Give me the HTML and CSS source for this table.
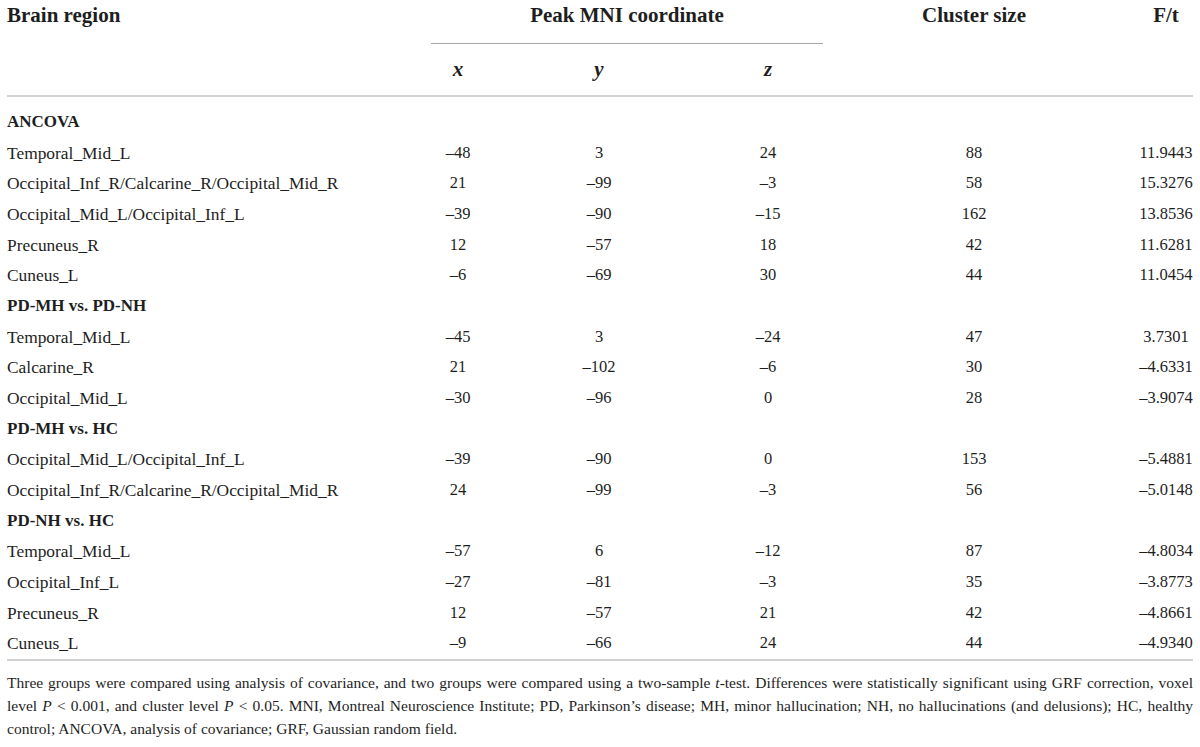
FILE: index.html
```html
<!DOCTYPE html>
<html lang="en">
<head>
<meta charset="utf-8">
<title>Brain regions table</title>
<link rel="stylesheet" href="styles.css">
</head>
<body>
<div class="page">
  <div class="thead">
    <div class="th th-label">Brain region</div>
    <div class="th th-mni"><span class="mni-text">Peak MNI coordinate</span></div>
    <div class="th th-cluster">Cluster size</div>
    <div class="th th-ft">F/t</div>
    <div class="th th-axis c-x">x</div>
    <div class="th th-axis c-y">y</div>
    <div class="th th-axis c-z">z</div>
  </div>
  <div class="tbody">
    <div class="group">ANCOVA</div>
    <div class="lbl">Temporal_Mid_L</div><div class="num">–48</div><div class="num">3</div><div class="num">24</div><div class="num">88</div><div class="num ft">11.9443</div>
    <div class="lbl">Occipital_Inf_R/Calcarine_R/Occipital_Mid_R</div><div class="num">21</div><div class="num">–99</div><div class="num">–3</div><div class="num">58</div><div class="num ft">15.3276</div>
    <div class="lbl">Occipital_Mid_L/Occipital_Inf_L</div><div class="num">–39</div><div class="num">–90</div><div class="num">–15</div><div class="num">162</div><div class="num ft">13.8536</div>
    <div class="lbl">Precuneus_R</div><div class="num">12</div><div class="num">–57</div><div class="num">18</div><div class="num">42</div><div class="num ft">11.6281</div>
    <div class="lbl">Cuneus_L</div><div class="num">–6</div><div class="num">–69</div><div class="num">30</div><div class="num">44</div><div class="num ft">11.0454</div>
    <div class="group">PD-MH vs. PD-NH</div>
    <div class="lbl">Temporal_Mid_L</div><div class="num">–45</div><div class="num">3</div><div class="num">–24</div><div class="num">47</div><div class="num ft">3.7301</div>
    <div class="lbl">Calcarine_R</div><div class="num">21</div><div class="num">–102</div><div class="num">–6</div><div class="num">30</div><div class="num ft">–4.6331</div>
    <div class="lbl">Occipital_Mid_L</div><div class="num">–30</div><div class="num">–96</div><div class="num">0</div><div class="num">28</div><div class="num ft">–3.9074</div>
    <div class="group">PD-MH vs. HC</div>
    <div class="lbl">Occipital_Mid_L/Occipital_Inf_L</div><div class="num">–39</div><div class="num">–90</div><div class="num">0</div><div class="num">153</div><div class="num ft">–5.4881</div>
    <div class="lbl">Occipital_Inf_R/Calcarine_R/Occipital_Mid_R</div><div class="num">24</div><div class="num">–99</div><div class="num">–3</div><div class="num">56</div><div class="num ft">–5.0148</div>
    <div class="group">PD-NH vs. HC</div>
    <div class="lbl">Temporal_Mid_L</div><div class="num">–57</div><div class="num">6</div><div class="num">–12</div><div class="num">87</div><div class="num ft">–4.8034</div>
    <div class="lbl">Occipital_Inf_L</div><div class="num">–27</div><div class="num">–81</div><div class="num">–3</div><div class="num">35</div><div class="num ft">–3.8773</div>
    <div class="lbl">Precuneus_R</div><div class="num">12</div><div class="num">–57</div><div class="num">21</div><div class="num">42</div><div class="num ft">–4.8661</div>
    <div class="lbl">Cuneus_L</div><div class="num">–9</div><div class="num">–66</div><div class="num">24</div><div class="num">44</div><div class="num ft">–4.9340</div>
  </div>
  <div class="note">
    <span class="note-line">Three groups were compared using analysis of covariance, and two groups were compared using a two-sample <i>t</i>-test. Differences were statistically significant using GRF correction, voxel</span>
    <span class="note-line">level <i>P</i> &lt; 0.001, and cluster level <i>P</i> &lt; 0.05. MNI, Montreal Neuroscience Institute; PD, Parkinson’s disease; MH, minor hallucination; NH, no hallucinations (and delusions); HC, healthy</span>
    <span class="note-line last">control; ANCOVA, analysis of covariance; GRF, Gaussian random field.</span>
  </div>
</div>
</body>
</html>
```

FILE: styles.css
```css
* { box-sizing: border-box; }

html, body {
  margin: 0;
  padding: 0;
  background: #ffffff;
}

body {
  font-family: "Liberation Serif", "Times New Roman", serif;
  color: #1e1e1e;
}

.page {
  width: 1186px;
  margin-left: 7px;
}

.thead,
.tbody {
  display: grid;
  grid-template-columns: 411px 80px 202px 136px 276px 81px;
}

.thead {
  padding-top: 2px;
  padding-bottom: 13px;
  border-bottom: 2px solid #d2d2d2;
}

.th {
  font-size: 21px;
  font-weight: bold;
  line-height: 26px;
  white-space: nowrap;
}

.th-label {
  grid-column: 1;
  grid-row: 1;
}

.th-mni {
  grid-column: 2 / 5;
  grid-row: 1;
  margin: 0 13px;
  padding-bottom: 15px;
  border-bottom: 1px solid #a8a8a8;
  text-align: center;
}

.th-cluster {
  grid-column: 5;
  grid-row: 1;
  text-align: center;
}

.th-ft {
  grid-column: 6;
  grid-row: 1;
  padding-left: 27px;
  text-align: center;
}

.th-axis {
  grid-row: 2;
  padding-top: 12px;
  font-style: italic;
  text-align: center;
}

.c-x { grid-column: 2; }
.c-y { grid-column: 3; }
.c-z { grid-column: 4; }

.tbody {
  grid-auto-rows: 30.66px;
  padding-top: 10px;
  padding-bottom: 0;
  border-bottom: 2px solid #d2d2d2;
}

.group {
  grid-column: 1 / -1;
  font-size: 17px;
  font-weight: bold;
  line-height: 30.66px;
}

.lbl {
  font-size: 17.4px;
  line-height: 30.66px;
  white-space: nowrap;
}

.num {
  font-size: 16.5px;
  line-height: 30.66px;
  text-align: center;
  white-space: nowrap;
}

.num.ft {
  padding-left: 27px;
}

.note {
  margin-top: 10px;
  font-size: 15.5px;
  line-height: 23px;
}

.note-line {
  display: block;
  text-align: justify;
  text-align-last: justify;
}

.note-line.last {
  text-align-last: left;
}
```
